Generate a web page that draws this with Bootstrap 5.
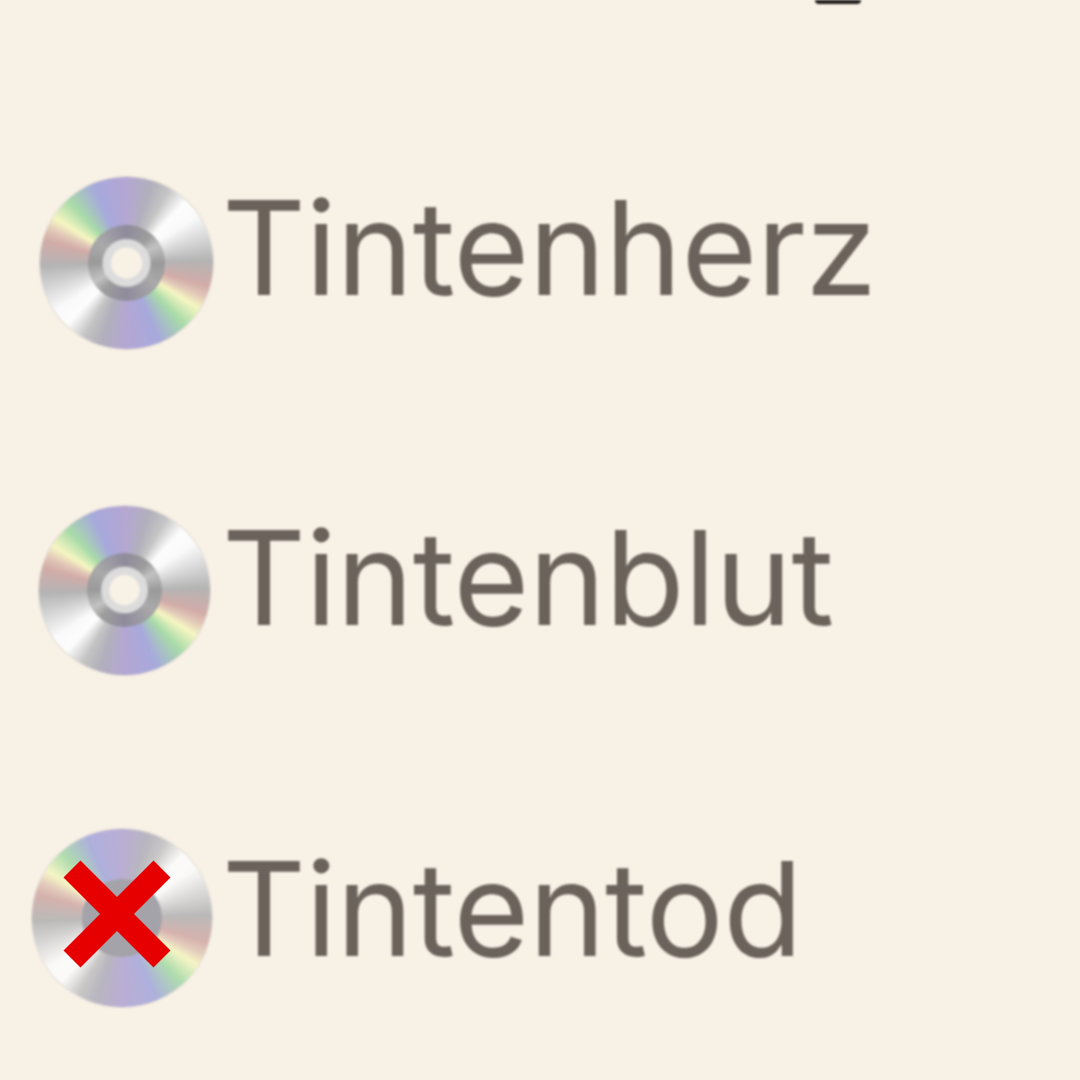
<!DOCTYPE html>
<html lang="de">
<head>
    <meta charset="UTF-8">
    <meta name="viewport" content="width=device-width, initial-scale=1.0">
    <title>Tintenwelt</title>
    <link href="https://cdn.jsdelivr.net/npm/bootstrap@5.3.0/dist/css/bootstrap.min.css" rel="stylesheet">
    <style>
        body {
            background-color: #f8f1e6;
            margin: 0;
            width: 1080px;
            height: 1080px;
            overflow: hidden;
        }

        .cut-letter {
            width: 46px;
            height: 4px;
            margin-left: 815px;
            background: #1c1a18;
            border-radius: 0 0 20px 20px;
            filter: blur(1.2px);
        }

        .track-row {
            height: 170px;
        }

        .row-one { margin-top: 174px; }
        .row-two { margin-top: 157px; }
        .row-three { margin-top: 158px; }

        .track-name {
            font-family: "Inter", "Liberation Sans", sans-serif;
            font-size: 130px;
            font-weight: 375;
            letter-spacing: -.5px;
            line-height: 1;
            color: #6b635b;
            margin-left: 222px;
            filter: blur(0.8px);
            white-space: nowrap;
        }

        .row-one .track-name { margin-bottom: 30px; }
        .row-two .track-name { margin-bottom: 24px; }
        .row-three .track-name { margin-bottom: 18px; }

        .disc {
            position: absolute;
            border-radius: 50%;
            box-shadow: 0 0 0 1px #ddd8d2;
            filter: blur(1.1px);
            background:
                conic-gradient(#b4a7d3 0deg, #b2b0bb 18deg, #c4c4c4 30deg, #fdfdfd 44deg, #fafafa 56deg, #b4b4b4 88deg, #d2aca8 106deg, #e2c9b8 114deg, #f6f6c2 122deg, #a8dba8 137deg, #a7a9dc 157deg, #b4a7d3 180deg, #b2b0bb 198deg, #c4c4c4 210deg, #fdfdfd 224deg, #fafafa 236deg, #b4b4b4 268deg, #d2aca8 286deg, #e2c9b8 294deg, #f6f6c2 302deg, #a8dba8 317deg, #a7a9dc 337deg, #b4a7d3 360deg);
        }

        /* hub of the disc: dark ring, light ring, hole */
        .disc::after {
            content: "";
            position: absolute;
            left: 28%;
            top: 28%;
            width: 44%;
            height: 44%;
            border-radius: 50%;
            background:
                radial-gradient(circle closest-side, #f8f1e6 0 38%, #dcdcdc 44% 60%, transparent 66%),
                conic-gradient(#8f8b9c 0deg, #9d9d9d 40deg, #c2c2c2 60deg, #9a9a9a 90deg, #a9a9a9 125deg, #8f8b9c 180deg, #9d9d9d 220deg, #c2c2c2 240deg, #9a9a9a 270deg, #a9a9a9 305deg, #8f8b9c 360deg);
        }

        .disc-one { left: 40px; width: 173px; height: 172px; }
        .disc-two { left: 39px; width: 171px; height: 169px; }
        .disc-three { left: 32px; width: 180px; height: 178px; opacity: .9; }
        .disc-three::after { background: #9c9ba3; }

        .cross {
            position: absolute;
            left: 52px;
            width: 130px;
            height: 130px;
            margin-top: -8px;
            filter: blur(0.6px);
        }
    </style>
</head>
<body>
    <div class="cut-letter"></div>

    <div class="track-row row-one d-flex align-items-center position-relative">
        <div class="disc disc-one"></div>
        <div class="track-name">Tintenherz</div>
    </div>

    <div class="track-row row-two d-flex align-items-center position-relative">
        <div class="disc disc-two"></div>
        <div class="track-name">Tintenblut</div>
    </div>

    <div class="track-row row-three d-flex align-items-center position-relative">
        <div class="disc disc-three"></div>
        <svg class="cross" viewBox="0 0 130 130" aria-hidden="true">
            <path d="M20 20 L110 110 M110 20 L20 110" stroke="#e60000" stroke-width="24" fill="none"/>
        </svg>
        <div class="track-name">Tintentod</div>
    </div>

    <script src="https://cdn.jsdelivr.net/npm/bootstrap@5.3.0/dist/js/bootstrap.bundle.min.js"></script>
</body>
</html>
